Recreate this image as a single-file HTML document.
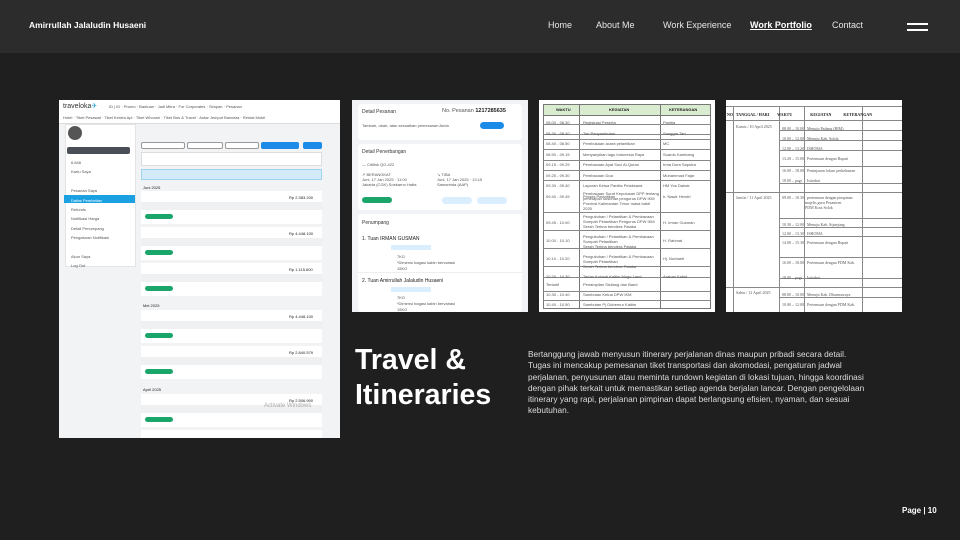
<!DOCTYPE html>
<html><head><meta charset="utf-8"><style>
*{margin:0;padding:0;box-sizing:border-box}
body{width:960px;height:540px;background:#1f1f1f;font-family:"Liberation Sans",sans-serif;position:relative;overflow:hidden}
.hdr{position:absolute;left:0;top:0;width:960px;height:53px;background:#2c2c2c}
.a{position:absolute}
.nav{position:absolute;top:20px;font-size:9px;color:#e6e6e6}
.t{position:absolute;font-size:4px;color:#555;white-space:nowrap}
.ln{position:absolute;background:#888;height:1px}
</style></head><body>
<div class="hdr"></div>
<div class="nav" style="left:29px;font-weight:bold;color:#fff;font-size:8.5px">Amirrullah Jalaludin Husaeni</div>
<div class="nav" style="left:548px">Home</div>
<div class="nav" style="left:596px">About Me</div>
<div class="nav" style="left:663px">Work Experience</div>
<div class="nav" style="left:750px;font-weight:bold;color:#fff;text-decoration:underline">Work Portfolio</div>
<div class="nav" style="left:832px">Contact</div>
<div class="a" style="left:907px;top:23px;width:21px;height:2px;background:#fff"></div>
<div class="a" style="left:907px;top:29px;width:21px;height:2px;background:#fff"></div>

<!-- image 1 -->
<div class="a" style="left:59px;top:100px;width:281px;height:338px;background:#f2f3f5;overflow:hidden">
 <div class="a" style="left:0;top:0;width:281px;height:24px;background:#fff;border-bottom:1px solid #ddd"></div>
 <div class="t" style="left:4px;top:2px;font-size:7px;color:#333">traveloka<span style="color:#1ba0e2">✈</span></div>
 <div class="t" style="left:50px;top:4px">ID | ID · Promo · Bantuan · Jadi Mitra · For Corporates · Simpan · Pesanan</div>
 <div class="t" style="left:4px;top:15px">Hotel · Tiket Pesawat · Tiket Kereta Api · Tiket Whoosh · Tiket Bus &amp; Travel · Antar Jemput Bandara · Rental Mobil</div>
 <div class="a" style="left:6px;top:24px;width:71px;height:143px;background:#fff;border:1px solid #e4e4e4"></div>
 <div class="a" style="left:9px;top:26px;width:14px;height:14px;border-radius:50%;background:#555"></div>
 <div class="a" style="left:8px;top:47px;width:63px;height:7px;background:#4a4f57;border-radius:2px"></div>
 <div class="a" style="left:5px;top:95px;width:71px;height:8px;background:#1ba0e2"></div>
 <div class="t" style="left:12px;top:58px;line-height:9.4px">6.848<br>Kartu Saya<br><br>Pesanan Saya<br><span style="color:#fff">Daftar Pembelian</span><br>Refunds<br>Notifikasi Harga<br>Detail Penumpang<br>Pengaturan Notifikasi<br><br>Akun Saya<br>Log Out</div>
 <div class="a" style="left:82px;top:42px;width:44px;height:7px;border:1px solid #999;border-radius:2px;background:#fff"></div>
 <div class="a" style="left:128px;top:42px;width:36px;height:7px;border:1px solid #999;border-radius:2px;background:#fff"></div>
 <div class="a" style="left:166px;top:42px;width:34px;height:7px;border:1px solid #999;border-radius:2px;background:#fff"></div>
 <div class="a" style="left:202px;top:42px;width:38px;height:7px;background:#1a8ce8;border-radius:2px"></div>
 <div class="a" style="left:244px;top:42px;width:19px;height:7px;background:#1a8ce8;border-radius:2px"></div>
 <div class="a" style="left:82px;top:52px;width:181px;height:14px;background:#fff;border:1px solid #ddd"></div>
 <div class="a" style="left:82px;top:69px;width:181px;height:11px;background:#d3ebf9;border:1px solid #9fd3f0"></div>
 <div class="t" style="left:84px;top:85px;color:#222">Juni 2025</div>
 <div class="a" style="left:82px;top:91px;width:181px;height:33px;background:#fff"></div>
 <div class="a" style="left:82px;top:127px;width:181px;height:33px;background:#fff"></div>
 <div class="a" style="left:82px;top:163px;width:181px;height:33px;background:#fff"></div>
 <div class="t" style="left:84px;top:203px;color:#222">Mei 2025</div>
 <div class="a" style="left:82px;top:210px;width:181px;height:33px;background:#fff"></div>
 <div class="a" style="left:82px;top:246px;width:181px;height:33px;background:#fff"></div>
 <div class="t" style="left:84px;top:287px;color:#222">April 2025</div>
 <div class="a" style="left:82px;top:294px;width:181px;height:33px;background:#fff"></div>
 <div class="a" style="left:82px;top:330px;width:181px;height:10px;background:#fff"></div>
 <div class="a" style="left:82px;top:102px;width:181px;height:8px;background:#eef0f2"></div>
 <div class="a" style="left:82px;top:138px;width:181px;height:8px;background:#eef0f2"></div>
 <div class="a" style="left:82px;top:174px;width:181px;height:8px;background:#eef0f2"></div>
 <div class="a" style="left:82px;top:221px;width:181px;height:8px;background:#eef0f2"></div>
 <div class="a" style="left:82px;top:257px;width:181px;height:8px;background:#eef0f2"></div>
 <div class="a" style="left:82px;top:305px;width:181px;height:8px;background:#eef0f2"></div>
 <div class="a" style="left:86px;top:114px;width:28px;height:5px;border-radius:3px;background:#1aa56a"></div>
 <div class="a" style="left:86px;top:150px;width:28px;height:5px;border-radius:3px;background:#1aa56a"></div>
 <div class="a" style="left:86px;top:186px;width:28px;height:5px;border-radius:3px;background:#1aa56a"></div>
 <div class="a" style="left:86px;top:233px;width:28px;height:5px;border-radius:3px;background:#1aa56a"></div>
 <div class="a" style="left:86px;top:269px;width:28px;height:5px;border-radius:3px;background:#1aa56a"></div>
 <div class="a" style="left:86px;top:317px;width:28px;height:5px;border-radius:3px;background:#1aa56a"></div>
 <div class="t" style="left:230px;top:95px;color:#222">Rp 2.383.200</div>
 <div class="t" style="left:230px;top:131px;color:#222">Rp 4.448.100</div>
 <div class="t" style="left:230px;top:167px;color:#222">Rp 1.115.600</div>
 <div class="t" style="left:230px;top:214px;color:#222">Rp 4.448.100</div>
 <div class="t" style="left:230px;top:250px;color:#222">Rp 2.840.579</div>
 <div class="t" style="left:230px;top:298px;color:#222">Rp 2.506.900</div>
 <div class="t" style="left:205px;top:303px;font-size:6px;color:#aaa">Activate Windows</div>
</div>

<!-- image 2 -->
<div class="a" style="left:352px;top:100px;width:176px;height:212px;background:#f1f3f6;overflow:hidden">
 <div class="a" style="left:6px;top:4px;width:164px;height:36px;background:#fff;border-radius:3px"></div>
 <div class="t" style="left:10px;top:9px;font-size:5px;color:#333">Detail Pesanan</div>
 <div class="t" style="left:90px;top:8px;font-size:5.5px;color:#555">No. Pesanan <b style="color:#222">1217285635</b></div>
 <div class="t" style="left:10px;top:23px">Tambah, ubah, atau sesuaikan pemesanan Anda</div>
 <div class="a" style="left:128px;top:22px;width:24px;height:7px;border-radius:4px;background:#1a8ce8"></div>
 <div class="a" style="left:6px;top:44px;width:164px;height:66px;background:#fff;border-radius:3px"></div>
 <div class="t" style="left:10px;top:49px;font-size:5px;color:#333">Detail Penerbangan</div>
 <div class="t" style="left:10px;top:62px">— Citilink QG-422</div>
 <div class="t" style="left:10px;top:72px;line-height:5px">↗ BERANGKAT<br>Juni, 17 Jan 2025 · 11:00<br>Jakarta (CGK) Soekarno Hatta</div>
 <div class="t" style="left:85px;top:72px;line-height:5px">↘ TIBA<br>Juni, 17 Jan 2025 · 13:15<br>Samarinda (AAP)</div>
 <div class="a" style="left:10px;top:97px;width:30px;height:6px;border-radius:3px;background:#1aa56a"></div>
 <div class="a" style="left:90px;top:97px;width:30px;height:7px;border-radius:4px;background:#dbeefd"></div>
 <div class="a" style="left:125px;top:97px;width:30px;height:7px;border-radius:4px;background:#dbeefd"></div>
 <div class="a" style="left:6px;top:114px;width:164px;height:98px;background:#fff;border-radius:3px"></div>
 <div class="t" style="left:10px;top:120px;font-size:5px;color:#333">Penumpang</div>
 <div class="t" style="left:10px;top:136px;font-size:5px;color:#222">1. Tuan IRMAN GUSMAN</div>
 <div class="a" style="left:39px;top:145px;width:40px;height:5px;background:#dbeefd"></div>
 <div class="t" style="left:45px;top:154px;line-height:6px">7KG<br>*Dimensi bagasi kabin bervariasi<br>15KG</div>
 <div class="a" style="left:6px;top:172px;width:164px;height:1px;background:#eee"></div>
 <div class="t" style="left:10px;top:178px;font-size:5px;color:#222">2. Tuan Amirrullah Jalaludin Husaeni</div>
 <div class="a" style="left:39px;top:187px;width:40px;height:5px;background:#dbeefd"></div>
 <div class="t" style="left:45px;top:195px;line-height:6px">7KG<br>*Dimensi bagasi kabin bervariasi<br>15KG</div>
</div>

<!-- image 3 -->
<div class="a" style="left:539px;top:100px;width:176px;height:212px;background:#fff;overflow:hidden">
 <div class="a" style="left:4px;top:4px;width:168px;height:205px;border:1px solid #777"></div>
 <div class="a" style="left:5px;top:5px;width:166px;height:11px;background:#d9ecd0;border-bottom:1px solid #777"></div>
 <div class="a" style="left:40px;top:4px;width:1px;height:205px;background:#777"></div>
 <div class="a" style="left:121px;top:4px;width:1px;height:205px;background:#777"></div>
 <div class="t" style="left:17px;top:7px;font-weight:bold;color:#222">WAKTU</div>
 <div class="t" style="left:70px;top:7px;font-weight:bold;color:#222">KEGIATAN</div>
 <div class="t" style="left:130px;top:7px;font-weight:bold;color:#222">KETERANGAN</div>
 <div class="ln" style="left:4px;top:24px;width:168px"></div>
 <div class="ln" style="left:4px;top:34px;width:168px"></div>
 <div class="ln" style="left:4px;top:39px;width:168px"></div>
 <div class="ln" style="left:4px;top:49px;width:168px"></div>
 <div class="ln" style="left:4px;top:60px;width:168px"></div>
 <div class="ln" style="left:4px;top:70px;width:168px"></div>
 <div class="ln" style="left:4px;top:80px;width:168px"></div>
 <div class="ln" style="left:4px;top:112px;width:168px"></div>
 <div class="ln" style="left:4px;top:130px;width:168px"></div>
 <div class="ln" style="left:4px;top:148px;width:168px"></div>
 <div class="ln" style="left:4px;top:166px;width:168px"></div>
 <div class="ln" style="left:4px;top:177px;width:168px"></div>
 <div class="ln" style="left:4px;top:191px;width:168px"></div>
 <div class="ln" style="left:4px;top:200px;width:168px"></div>
 <div class="t" style="left:7px;top:18px;line-height:10.5px">08.00 - 08.30<br>08.30 - 08.40<br>08.40 - 08.50<br>08.50 - 09.15<br>09.15 - 09.25<br>09.25 - 09.30<br>09.30 - 09.40<br>09.40 - 09.45</div>
 <div class="t" style="left:44px;top:18px;line-height:10.5px">Registrasi Peserta<br>Tari Penyambutan<br>Pembukaan acara pelantikan<br>Menyanyikan lagu Indonesia Raya<br>Pembacaan Ayat Suci Al-Quran<br>Pembacaan Doa<br>Laporan Ketua Panitia Pelaksana<br>Proses Pelantikan</div>
 <div class="t" style="left:44px;top:91px;line-height:5px">Pembacaan Surat Keputusan DPP tentang<br>penetapan susunan pengurus DPW IKM<br>Provinsi Kalimantan Timur masa bakti<br>2025</div>
 <div class="t" style="left:7px;top:114px;line-height:18px">09.45 - 10.00<br>10.00 - 10.10<br>10.10 - 10.20<br>10.20 - 10.30</div>
 <div class="t" style="left:44px;top:114px;line-height:5px">Pengukuhan / Pelantikan &amp; Pembacaan<br>Sumpah Pelantikan Pengurus DPW IKM<br>Serah Terima bendera Pataka<br><br>Pengukuhan / Pelantikan &amp; Pembacaan<br>Sumpah Pelantikan<br>Serah Terima bendera Pataka<br><br>Pengukuhan / Pelantikan &amp; Pembacaan<br>Sumpah Pelantikan<br>Serah Terima bendera Pataka<br><br>Tarian Kolosal Kaltim Mugo Land</div>
 <div class="t" style="left:124px;top:18px;line-height:10.5px">Panitia<br>Sanggar Tari<br>MC<br>Suardo Kambang<br>Irma Dora Saputra<br>Muhammad Fajar<br>HM Yos Dahak<br>Ir. Nawir Hendri</div>
 <div class="t" style="left:124px;top:114px;line-height:18px">H. Irman Gusman<br>H. Rahmat<br>Hj. Nurbaeti<br>Arahan Kabid</div>
 <div class="t" style="left:7px;top:180px;line-height:10px">Tentatif<br>10.30 - 10.40<br>10.40 - 10.50</div>
 <div class="t" style="left:44px;top:180px;line-height:10px">Penampilan Sisilang dan Band<br>Sambutan Ketua DPW IKM<br>Sambutan Pj Gubernur Kaltim</div>
</div>

<!-- image 4 -->
<div class="a" style="left:726px;top:100px;width:176px;height:212px;background:#fff;overflow:hidden">
 <div class="a" style="left:0;top:6px;width:176px;height:1px;background:#888"></div>
 <div class="a" style="left:0;top:20px;width:176px;height:1px;background:#888"></div>
 <div class="a" style="left:7px;top:6px;width:1px;height:206px;background:#888"></div>
 <div class="a" style="left:53px;top:6px;width:1px;height:206px;background:#888"></div>
 <div class="a" style="left:78px;top:6px;width:1px;height:206px;background:#888"></div>
 <div class="a" style="left:136px;top:6px;width:1px;height:206px;background:#888"></div>
 <div class="t" style="left:1px;top:12px;font-family:'Liberation Serif',serif;font-weight:bold;color:#222">NO &nbsp; TANGGAL / HARI &nbsp;&nbsp;&nbsp;&nbsp;&nbsp;&nbsp; WAKTU &nbsp;&nbsp;&nbsp;&nbsp;&nbsp;&nbsp;&nbsp;&nbsp;&nbsp;&nbsp;&nbsp;&nbsp;&nbsp;&nbsp;&nbsp;&nbsp; KEGIATAN &nbsp;&nbsp;&nbsp;&nbsp;&nbsp;&nbsp;&nbsp;&nbsp;&nbsp;&nbsp; KETERANGAN</div>
 <div class="ln" style="left:53px;top:30px;width:123px"></div>
 <div class="ln" style="left:53px;top:40px;width:123px"></div>
 <div class="ln" style="left:53px;top:50px;width:123px"></div>
 <div class="ln" style="left:53px;top:66px;width:123px"></div>
 <div class="ln" style="left:53px;top:83px;width:123px"></div>
 <div class="ln" style="left:0;top:92px;width:176px"></div>
 <div class="ln" style="left:53px;top:118px;width:123px"></div>
 <div class="ln" style="left:53px;top:127px;width:123px"></div>
 <div class="ln" style="left:53px;top:136px;width:123px"></div>
 <div class="ln" style="left:53px;top:157px;width:123px"></div>
 <div class="ln" style="left:53px;top:178px;width:123px"></div>
 <div class="ln" style="left:0;top:187px;width:176px"></div>
 <div class="ln" style="left:53px;top:197px;width:123px"></div>
 <div class="t" style="left:10px;top:24px;font-family:'Liberation Serif',serif">Kamis / 10 April 2025</div>
 <div class="t" style="left:10px;top:95px;font-family:'Liberation Serif',serif">Jum'at / 11 April 2025</div>
 <div class="t" style="left:10px;top:190px;font-family:'Liberation Serif',serif">Sabtu / 12 April 2025</div>
 <div class="t" style="left:56px;top:24px;line-height:10px;font-family:'Liberation Serif',serif">08.00 – 10.00 &nbsp; Menuju Padang (BIM)<br>10.00 – 12.00 &nbsp; Menuju Kab. Solok<br>12.00 – 13.20 &nbsp; ISHOMA<br>13.20 – 15.00 &nbsp; Pertemuan dengan Bupati</div>
 <div class="t" style="left:56px;top:68px;line-height:5px;font-family:'Liberation Serif',serif">16.00 – 18.00 &nbsp; Peninjauan lokasi perkebunan<br><br>18.00 – pagi &nbsp;&nbsp;&nbsp; Istirahat</div>
 <div class="t" style="left:56px;top:95px;line-height:5px;font-family:'Liberation Serif',serif">09.00 – 10.30 &nbsp; pertemuan dengan pimpinan<br>&nbsp;&nbsp;&nbsp;&nbsp;&nbsp;&nbsp;&nbsp;&nbsp;&nbsp;&nbsp;&nbsp;&nbsp;&nbsp;&nbsp;&nbsp;&nbsp;&nbsp;&nbsp;&nbsp;&nbsp;&nbsp;&nbsp; majelis guru Pesantren<br>&nbsp;&nbsp;&nbsp;&nbsp;&nbsp;&nbsp;&nbsp;&nbsp;&nbsp;&nbsp;&nbsp;&nbsp;&nbsp;&nbsp;&nbsp;&nbsp;&nbsp;&nbsp;&nbsp;&nbsp;&nbsp;&nbsp; PDM Kota Solok</div>
 <div class="t" style="left:56px;top:120px;line-height:9px;font-family:'Liberation Serif',serif">10.30 – 12.00 &nbsp; Menuju Kab. Sijunjung<br>12.00 – 13.30 &nbsp; ISHOMA<br>14.00 – 15.30 &nbsp; Pertemuan dengan Bupati</div>
 <div class="t" style="left:56px;top:160px;line-height:5px;font-family:'Liberation Serif',serif">16.00 – 18.00 &nbsp; Pertemuan dengan PDM Kab.<br><br><br>18.00 – pagi &nbsp;&nbsp;&nbsp; Istirahat</div>
 <div class="t" style="left:56px;top:190px;line-height:10px;font-family:'Liberation Serif',serif">08.00 – 10.00 &nbsp; Menuju Kab. Dharmasraya<br>10.00 – 12.00 &nbsp; Pertemuan dengan PDM Kab.</div>
</div>

<div class="a" style="left:355px;top:343px;color:#fff;font-weight:bold;font-size:28.5px;line-height:35px">Travel &amp;<br>Itineraries</div>
<div class="a" style="left:528px;top:349px;width:340px;color:#ddd;font-size:8.3px;line-height:11.3px">Bertanggung jawab menyusun itinerary perjalanan dinas maupun pribadi secara detail. Tugas ini mencakup pemesanan tiket transportasi dan akomodasi, pengaturan jadwal perjalanan, penyusunan atau meminta rundown kegiatan di lokasi tujuan, hingga koordinasi dengan pihak terkait untuk memastikan setiap agenda berjalan lancar. Dengan pengelolaan itinerary yang rapi, perjalanan pimpinan dapat berlangsung efisien, nyaman, dan sesuai kebutuhan.</div>
<div class="a" style="left:902px;top:506px;color:#fff;font-weight:bold;font-size:8px">Page | 10</div>
</body></html>
